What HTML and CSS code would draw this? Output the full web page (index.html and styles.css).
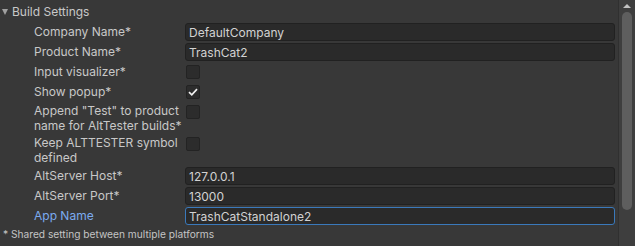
FILE: index.html
```html
<!DOCTYPE html>
<html lang="en">
<head>
  <meta charset="UTF-8" />
  <title>Build Settings</title>
  <link rel="stylesheet" href="styles.css">
</head>
<body>
  <div class="panel">
    <div class="content">
      <div class="foldout">
        <span class="arrow"></span>
        <span>Build Settings</span>
      </div>

      <div class="rows">
        <label class="label">Company Name*</label>
        <div class="field"><input type="text" value="DefaultCompany"></div>

        <label class="label">Product Name*</label>
        <div class="field"><input type="text" value="TrashCat2"></div>

        <label class="label">Input visualizer*</label>
        <div class="field"><span class="check"></span></div>

        <label class="label">Show popup*</label>
        <div class="field"><span class="check on">
          <svg width="10" height="8" viewBox="0 0 10 8"><path d="M1 4.2 L3.8 6.8 L9 1.2" fill="none" stroke="#f0f0f0" stroke-width="1.7"/></svg>
        </span></div>

        <label class="label tall">Append "Test" to product name for AltTester builds*</label>
        <div class="field tall"><span class="check"></span></div>

        <label class="label tall">Keep ALTTESTER symbol defined</label>
        <div class="field tall"><span class="check"></span></div>

        <label class="label">AltServer Host*</label>
        <div class="field"><input type="text" value="127.0.0.1"></div>

        <label class="label">AltServer Port*</label>
        <div class="field"><input type="text" value="13000"></div>

        <label class="label focus">App Name</label>
        <div class="field"><input type="text" class="focused" value="TrashCatStandalone2"></div>
      </div>

      <p class="note">* Shared setting between multiple platforms</p>
    </div>

    <div class="scrollbar">
      <span class="up"></span>
      <span class="thumb"></span>
    </div>
  </div>
</body>
</html>
```

FILE: styles.css
```css
html, body {
  margin: 0;
  padding: 0;
  background-color: #383838;
  color: #c8c8c8;
  font-family: Inter, "Noto Sans", sans-serif;
  font-size: 12px;
  height: 100%;
  overflow: hidden;
}
.panel {
  display: flex;
  height: 246px;
}
.content {
  flex: 1;
  padding-right: 3px;
}
.foldout {
  display: flex;
  align-items: center;
  height: 22px;
  padding-left: 2px;
  gap: 4px;
  font-size: 12px;
}
.arrow {
  width: 0;
  height: 0;
  border-left: 3.5px solid transparent;
  border-right: 3.5px solid transparent;
  border-top: 6px solid #a0a0a0;
  margin-top: 1px;
}
.rows {
  display: grid;
  grid-template-columns: 151px 1fr;
  row-gap: 2px;
  margin-top: 1px;
  padding-left: 34px;
}
.label {
  height: 18px;
  line-height: 18px;
  white-space: nowrap;
}
.label.tall {
  height: 30px;
  line-height: 15px;
  white-space: normal;
  padding-right: 2px;
}
.label.focus {
  color: #7babef;
}
.field {
  height: 18px;
  display: flex;
  align-items: flex-start;
}
.field.tall {
  height: 30px;
}
.field input {
  box-sizing: border-box;
  width: 100%;
  height: 18px;
  margin: 0;
  padding: 0 3px;
  background-color: #2a2a2a;
  border: 1px solid #212121;
  border-radius: 3px;
  color: #d2d2d2;
  font-family: inherit;
  font-size: 12px;
  outline: none;
}
.field input.focused {
  border-color: #3a79bb;
}
.check {
  box-sizing: border-box;
  width: 14px;
  height: 14px;
  margin: 2px 0 0 1px;
  background-color: #2c2c2c;
  border: 1px solid #232323;
  border-radius: 2px;
  display: flex;
  align-items: center;
  justify-content: center;
}
.note {
  margin: 3px 0 0 3px;
  font-size: 10.2px;
  color: #c4c4c4;
}
.scrollbar {
  width: 17px;
  background-color: #3e3e3e;
  border-left: 1px solid #303030;
  box-sizing: border-box;
  display: flex;
  flex-direction: column;
  align-items: center;
}
.up {
  width: 0;
  height: 0;
  margin-top: 4px;
  border-left: 4px solid transparent;
  border-right: 4px solid transparent;
  border-bottom: 4px solid #c2c2c2;
}
.thumb {
  width: 10px;
  height: 198px;
  margin-top: 4px;
  background-color: #5e5e5e;
  border-radius: 5px;
}
```
